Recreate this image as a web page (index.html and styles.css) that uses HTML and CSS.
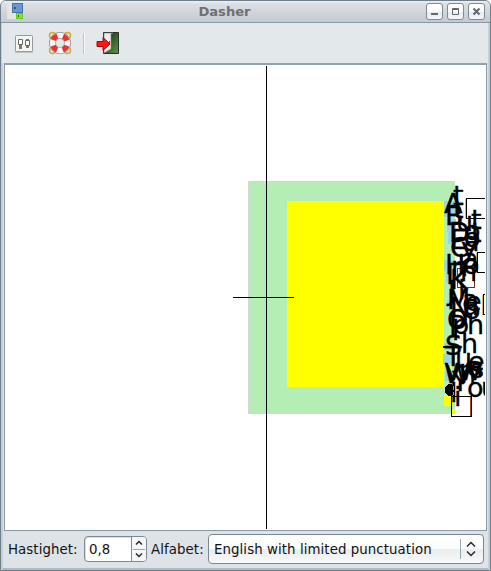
FILE: index.html
```html
<!DOCTYPE html>
<html lang="no">
<head>
<meta charset="utf-8">
<title>Dasher</title>
<link rel="stylesheet" href="styles.css">
</head>
<body>
<div class="window">
  <header class="titlebar">
    <svg class="app-icon" width="16" height="16" viewBox="0 0 16 16" shape-rendering="crispEdges"><path fill="#e3e5df" d="M0 0h16v16H0z"/><path fill="#4774a8" d="M5 0h11v10H5z"/><path fill="#6798cf" d="M6 1h9v8H6z"/><path fill="#65c822" d="M9 10h7v6H9z"/><path fill="#86e334" d="M10 11h5v4h-5z"/><path fill="#315982" d="M7 4h2v2H7z"/><path fill="#315d18" d="M11 12h1v2h-1z"/></svg>
    <h1>Dasher</h1>
    <div class="controls">
      <button aria-label="Minimize"><svg width="15" height="15"><path fill="#626970" d="M4 9h7v2H4z"/></svg></button>
      <button aria-label="Maximize"><svg width="15" height="15"><path fill="none" stroke="#626970" d="M4.500 4.500h6v6h-6zM4 5.500h7"/></svg></button>
      <button aria-label="Close"><svg width="15" height="15"><path fill="none" stroke="#626970" stroke-width="2" d="m4.500 4.500 6 6m0-6-6 6"/></svg></button>
    </div>
  </header>
  <nav class="toolbar">
    <svg class="prefs" width="20" height="20" viewBox="0 0 20 20"><rect x="1" y="2" width="18" height="17" rx="1" fill="#bfc2c3"/><rect x="1.500" y="1.500" width="17" height="16" rx="1" fill="#f4f4f2" stroke="#999"/><path fill="#777" d="M5 6h3v9H5zm7-1h3v9h-3z"/><path fill="#fff" stroke="#666" d="M4.500 5.500h4v5h-4zm7 1h4v5h-4z"/></svg>
    <svg class="help" width="24" height="24" viewBox="0 0 24 24"><g fill="none" stroke="#d4aa27" stroke-width="1.500"><circle cx="4.500" cy="4.500" r="3"/><circle cx="19.500" cy="4.500" r="3"/><circle cx="4.500" cy="19.500" r="3"/><circle cx="19.500" cy="19.500" r="3"/></g><circle cx="12" cy="12" r="7.500" fill="none" stroke="#8e9697" stroke-width="7"/><circle cx="12" cy="12" r="7.500" fill="none" stroke="#f6f6f3" stroke-width="5.500"/><circle cx="12" cy="12" r="7.500" fill="none" stroke="#e43630" stroke-width="5.500" stroke-dasharray="6 5.781" stroke-dashoffset="-2.890"/></svg>
    <span class="separator"></span>
    <svg class="quit" width="24" height="24" viewBox="0 0 24 24"><defs><linearGradient id="door" x2="1" y2="1"><stop stop-color="#102a08"/><stop offset="1" stop-color="#5a9645"/></linearGradient></defs><path fill="url(#door)" stroke="#292e28" d="M7.500 1.500h15v21h-15z"/><path fill="#ecece8" stroke="#777" stroke-width=".6" d="M8 2h9l-2 1v15l-7 4z"/><path fill="#555" d="M13 10h1v3h-1z"/><path fill="#fa1715" stroke="#a80505" d="M1 10.500h6v-4l7 6.500-7 6.500v-4H1z"/></svg>
  </nav>
  <main class="canvas">
    <svg width="480" height="464" viewBox="5 66 480 464" shape-rendering="crispEdges">
      <path fill="#d6d6d6" d="M248 181h207v233H248z"/>
      <path fill="#b4eeb4" d="M249 182h206v231H249z"/>
      <path fill="#ff0" d="M287 201h157v186H287z"/>
      <path fill="#9fd3e6" d="M444 201h11v16h-11zM447 219h9v13h-9zM448 232h7v12h-7zM444 260h9v11h-9zM446 271h9v12h-9zM447 300h8v7h-8zM449 314h6v12h-6zM444 343h8v7h-8zM443 354h9v10h-9zM445 371h9v10h-9z"/>
      <path fill="#b4eeb4" d="M450 262h6v7h-6z"/>
      <path fill="#ff0" d="M444 395h7v11h-7zM452 409h3v4h-3zM450 366h2v4h-2z"/>
      <g fill="none">
        <path stroke="#e7ae68" d="M465.500 198.500V218M476.500 252.500V273M482.500 294.500V315"/>
        <path stroke="#000" d="M466.500 218.500v-20H486M466 218.500h20M477.500 272.500v-20H486M477 272.500h9M483.500 314.500v-20H486M483 314.500h3"/>
        <path stroke="#713125" d="M457.500 268.500h17v19h-17z"/>
      </g>
      <g class="letters">
        <text x="444" y="213">A</text><text x="453" y="205">t</text><text x="453" y="218">t</text><text x="471" y="229">t</text><text x="471" y="242">t</text>
        <text x="445" y="225">B</text><text x="456" y="231">u</text>
        <text x="449" y="242">D</text><text x="464" y="240">o</text><text x="464" y="247">o</text>
        <text x="450" y="249">E</text><text x="463" y="251">a</text>
        <text x="450" y="257">C</text><text x="461" y="257">y</text>
        <text x="445" y="274">H</text><text x="462" y="268">a</text>
        <text x="446" y="284">I</text><text x="451" y="276">n</text><text x="463" y="274">o</text>
        <text x="450" y="289">K</text><text x="460" y="281">n</text>
        <text x="448" y="300">J</text><text x="458" y="299">i</text>
        <text x="447" y="309">M</text><text x="462" y="309">a</text><text x="465" y="311">e</text>
        <text x="450" y="317">N</text><text x="464" y="319">o</text><text x="462" y="315">u</text>
        <text x="447" y="329">O</text><text x="452" y="334">p</text><text x="467" y="334">h</text>
        <text x="449" y="335">P</text>
        <text x="445" y="355">S</text><text x="461" y="353">h</text>
        <text x="445" y="366">T</text><text x="455" y="368">u</text><text x="468" y="371">e</text>
        <text x="444" y="383">W</text><text x="459" y="380">w</text><text x="470" y="378">s</text>
        <text x="445" y="380">v</text><text x="459" y="384">h</text><text x="467" y="376">a</text>
        <text x="452" y="391">Y</text><text x="467" y="397">o</text><text x="481" y="397">u</text>
        <text x="450" y="402">l</text><text x="454" y="406">i</text>
      </g>
      <ellipse cx="450" cy="390" rx="5" ry="6"/>
      <path d="M443 346h12v2h-12z"/>
      <path fill="#2fdb37" d="M453 386h1v4h-1zM453 392h1v3h-1z"/>
      <path fill="none" stroke="#b5471c" d="M470.500 396.500v20"/>
      <path fill="none" stroke="#000" d="M451.500 396.500h20v20h-20z"/>
      <path d="M266 66h1v463h-1zM233 297h61v1h-61z"/>
    </svg>
  </main>
  <footer class="status">
    <span class="label speed">Hastighet:</span>
    <div class="spinner"><span class="value">0,8</span><span class="steps"><svg width="14" height="24"><path class="divider" d="M1 12.500h12"/><path class="chevron" d="m4 7.500 3-3 3 3M4 16.500l3 3 3-3"/></svg></span></div>
    <span class="label alphabet">Alfabet:</span>
    <div class="select"><span>English with limited punctuation</span><svg width="22" height="22"><path class="divider" d="M.5 1v20"/><path class="chevron" d="m7 8.500 4-4 4 4M7 13.500l4 4 4-4"/></svg></div>
  </footer>
</div>
</body>
</html>
```
FILE: styles.css
```css
* { box-sizing: border-box; }
body { margin: 0; background: #fff; font: 13.33px "DejaVu Sans", sans-serif; color: #101214; overflow: hidden; }
.window { width: 491px; height: 571px; display: flex; flex-direction: column; border: 1px solid #6f7e8b; border-radius: 6px 6px 0 0; overflow: hidden; background: #dee3e7; box-shadow: inset 2px 0 #c6ced5, inset -2px 0 #c6ced5, inset 0 -2px #aeb9c3; }
.titlebar { height: 22px; flex: none; display: flex; align-items: center; padding: 0 5px 0 6px; border-bottom: 1px solid #8797a3; background: linear-gradient(#eef1f3, #d9dfe2 15%, #c4cbd0); }
.app-icon { flex: none; margin-top: -1px; }
h1 { margin: 0; flex: 1; text-align: center; font-size: 13.1px; line-height: 20px; color: #6c7173; }
.controls { display: flex; gap: 4px; }
button { width: 17px; height: 17px; padding: 0; border: 1px solid #7d8a98; border-radius: 3px; background: linear-gradient(#fff, #f8f9fa 50%, #e7eaed 52%, #f4f5f6); }
button svg { display: block; }
.toolbar { height: 40px; flex: none; display: flex; align-items: center; padding-left: 13px; background: #e3e8eb; margin: 0 2px 0 1px; }
.prefs { margin-left: -1px; margin-top: 1px; }
.help { margin-left: 14px; }
.separator { width: 2px; height: 21px; margin-left: 11px; border-left: 1px solid #bdc4c9; border-right: 1px solid #f7f9fa; }
.quit { margin-left: 11px; }
.canvas { width: 483px; height: 468px; flex: none; margin-left: 3px; border: 1px solid #8999a5; border-top: 2px solid #91a3ae; background: #fff; overflow: hidden; padding: 1px 0 0; }
.canvas > svg { display: block; }
.letters { font: 27px "DejaVu Sans", sans-serif; fill: #000; stroke: #000; stroke-width: .3px; }
.status { flex: 1; display: flex; align-items: center; padding: 0 6px 3px 7px; }
.label { flex: none; white-space: nowrap; letter-spacing: .08px; }
.speed { width: 75px; }
.alphabet { width: 57px; margin-left: 4px; }
.spinner, .select { display: flex; border: 1px solid #7d8992; border-radius: 4px; }
.spinner { width: 63px; height: 26px; margin-left: 1px; background: #fff; box-shadow: inset 1px 1px #d9dee1; }
.value { flex: 1; padding: 0 0 0 4px; line-height: 25px; }
.steps { width: 15px; border-left: 1px solid #7d8992; background: #f4f6f7; border-radius: 0 3px 3px 0; }
.steps svg { display: block; }
.select { flex: 1; height: 30px; align-items: center; justify-content: space-between; padding: 0 1px 0 5px; background: linear-gradient(#fff, #fbfcfc 48%, #eaedef 52%, #f8f9f9); white-space: nowrap; letter-spacing: .08px; }
.select svg { flex: none; }
.chevron { fill: none; stroke: #25292c; stroke-width: 1.5; }
.divider { stroke: #9ca8b0; }
```
